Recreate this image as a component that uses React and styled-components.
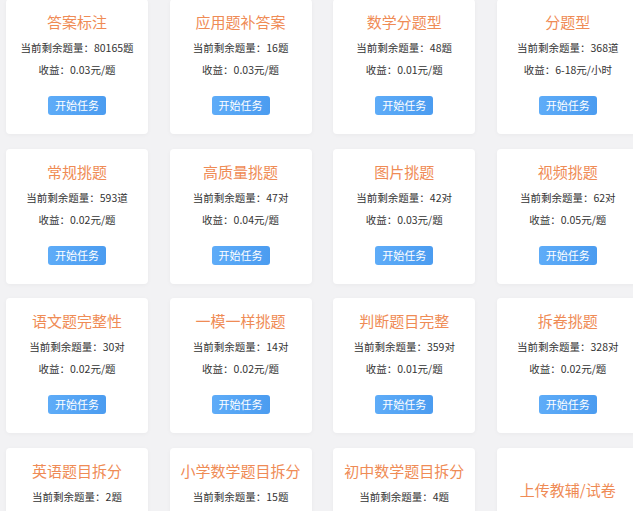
import React from "react";
import styled, { createGlobalStyle } from "styled-components";

const Global = createGlobalStyle`
  html, body {
    margin: 0;
    padding: 0;
    overflow: hidden;
    background: #f2f2f4;
    font-family: "Noto Sans CJK SC", "Noto Sans", sans-serif;
  }
`;

const Grid = styled.div`
  display: grid;
  grid-template-columns: repeat(4, 142px);
  column-gap: 21.6px;
  row-gap: 14.5px;
  padding-left: 6px;
  margin-top: -1px;
  width: 700px;
`;

const Card = styled.div`
  height: 135px;
  background: #fff;
  border-radius: 4px;
  box-shadow: 0 1px 4px rgba(0, 0, 0, 0.04);
  display: flex;
  flex-direction: column;
  align-items: center;
  padding-top: ${(p) => (p.$upload ? "32px" : "13px")};
  box-sizing: border-box;
`;

const Title = styled.div`
  font-size: 15px;
  line-height: 20px;
  color: #ef8b55;
  white-space: nowrap;
  margin-bottom: 5px;
`;

const Line = styled.div`
  font-size: 10.5px;
  line-height: 22px;
  color: #333;
  white-space: nowrap;
`;

const Button = styled.button`
  margin-top: 15px;
  width: 58px;
  height: 19px;
  border: none;
  border-radius: 3px;
  background: linear-gradient(to right, #5eacf8, #4b9cf0);
  color: #fff;
  font-family: inherit;
  font-size: 11px;
  line-height: 19px;
  padding: 0;
  cursor: pointer;
`;

const tasks = [
  ["答案标注", "80165题", "0.03元/题"],
  ["应用题补答案", "16题", "0.03元/题"],
  ["数学分题型", "48题", "0.01元/题"],
  ["分题型", "368道", "6-18元/小时"],
  ["常规挑题", "593道", "0.02元/题"],
  ["高质量挑题", "47对", "0.04元/题"],
  ["图片挑题", "42对", "0.03元/题"],
  ["视频挑题", "62对", "0.05元/题"],
  ["语文题完整性", "30对", "0.02元/题"],
  ["一模一样挑题", "14对", "0.02元/题"],
  ["判断题目完整", "359对", "0.01元/题"],
  ["拆卷挑题", "328对", "0.02元/题"],
  ["英语题目拆分", "2题", "0.02元/题"],
  ["小学数学题目拆分", "15题", "0.02元/题"],
  ["初中数学题目拆分", "4题", "0.02元/题"],
];

export default function App() {
  return (
    <>
      <Global />
      <Grid>
        {tasks.map(([title, count, pay]) => (
          <Card key={title}>
            <Title>{title}</Title>
            <Line>当前剩余题量：{count}</Line>
            <Line>收益：{pay}</Line>
            <Button>开始任务</Button>
          </Card>
        ))}
        <Card $upload>
          <Title>上传教辅/试卷</Title>
        </Card>
      </Grid>
    </>
  );
}
